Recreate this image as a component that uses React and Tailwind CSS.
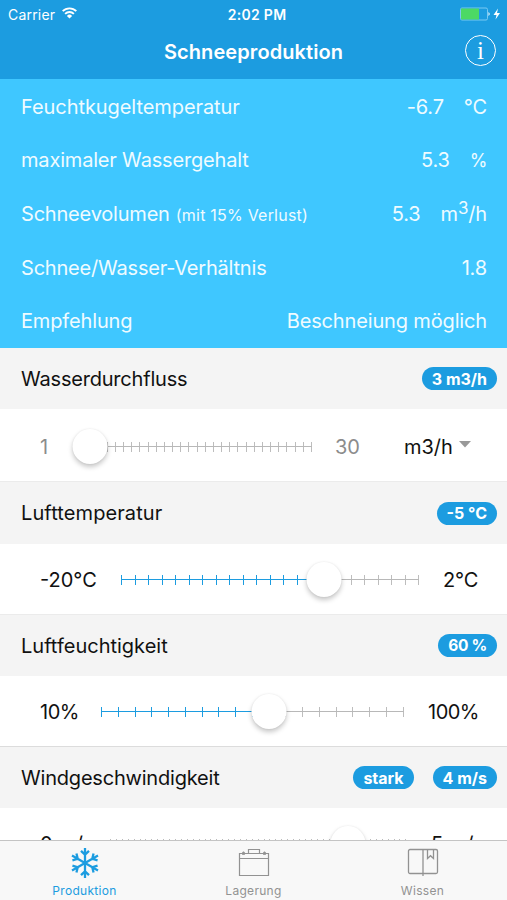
const results = [
  { label: "Feuchtkugeltemperatur", tracking: "tracking-[-0.07px]", value: "-6.7", unit: "°C" },
  {
    label: "maximaler Wassergehalt",
    tracking: "tracking-[-0.18px]",
    value: "5.3",
    unit: <span className="text-[18px] tracking-[-0.5px]">%</span>,
  },
  {
    label: "Schneevolumen",
    tracking: "tracking-[-0.2px]",
    note: "(mit 15% Verlust)",
    value: "5.3",
    unit: (
      <>
        m<sup className="-top-[7px] text-[17px] leading-none">3</sup>/h
      </>
    ),
  },
  { label: "Schnee/Wasser-Verhältnis", tracking: "tracking-[-0.2px]", value: "1.8" },
  { label: "Empfehlung", tracking: "tracking-[-0.15px]", value: "Beschneiung möglich" },
];

const Slider = ({ min, max, step, value }) => {
  const count = Math.round((max - min) / step);
  const active = Math.round((value - min) / step);
  const percent = ((value - min) / (max - min)) * 100;
  const filled = active > 2 && count < 50;

  return (
    <div className="relative flex h-[35px] flex-1 items-center justify-between">
      {Array.from({ length: count + 1 }, (_, i) => (
        <span
          key={i}
          className={
            filled && i <= active
              ? "h-[10px] w-px bg-[#1c9ce0]"
              : "h-[10px] w-px bg-[#bdbdbd]"
          }
        />
      ))}
      <div className="absolute inset-x-0 top-[17px] h-px bg-[#b8b8b8]" />
      {filled ? (
        <div
          className="absolute left-0 top-[17px] h-px bg-[#1c9ce0]"
          style={{ width: `${percent}%` }}
        />
      ) : null}
      <div
        className="absolute top-0 size-[35px] -translate-x-1/2 rounded-full bg-white shadow-[0_3px_5px_rgba(0,0,0,0.22),0_0_2px_rgba(0,0,0,0.08)]"
        style={{ left: `${percent}%` }}
      />
    </div>
  );
};

const SectionHeader = ({ title, badges, className = "h-[61px] tracking-[-0.2px]" }) => (
  <div className={`flex shrink-0 items-center justify-between bg-[#f4f4f4] pl-[21px] pr-[10px] ${className}`}>
    <h2 className="text-[20px]">{title}</h2>
    <div className="flex gap-[19px] tracking-normal">
      {badges.map((badge) => (
        <span
          key={badge}
          className={
            badge.endsWith("%")
              ? "flex h-[23px] items-center rounded-full bg-[#1c9ce0] px-[10px] text-[15.5px] font-bold tracking-[-0.3px] text-white"
              : "flex h-[23px] items-center rounded-full bg-[#1c9ce0] px-[10px] text-[16px] font-bold text-white"
          }
        >
          {badge}
        </span>
      ))}
    </div>
  </div>
);

const SnowflakeIcon = () => (
  <svg width="30" height="32" viewBox="0 0 30 32" fill="none" stroke="currentColor" strokeWidth="2.3">
    {[0, 60, 120, 180, 240, 300].map((angle) => (
      <path key={angle} d="M15 16V1M11 3.8L15 7.6L19 3.8" transform={`rotate(${angle} 15 16)`} />
    ))}
  </svg>
);

const StorageIcon = () => (
  <svg width="32" height="32" viewBox="0 0 32 32" fill="none" stroke="currentColor" strokeWidth="1.2">
    <path d="M1.5 6.5h29v22h-29zM1.5 11.5h29M10.5 6.5v-4h11v4M5.5 4.5v3M26.5 4.5v3" />
    <path d="M4 6.5h3M25 6.5h3" strokeWidth="2.4" />
  </svg>
);

const BookIcon = () => (
  <svg width="32" height="32" viewBox="0 0 32 32" fill="none" stroke="currentColor" strokeWidth="1.3">
    <rect x="1.5" y="2.5" width="29" height="24" rx="1.5" />
    <path d="M16 2.5v26.5M20.5 2.5v9l3-2.8l3 2.8v-9" />
  </svg>
);

const tabs = [
  { name: "Produktion", icon: <SnowflakeIcon />, active: true },
  { name: "Lagerung", icon: <StorageIcon /> },
  { name: "Wissen", icon: <BookIcon /> },
];

const App = () => {
  return (
    <div className="flex h-[900px] w-[507px] flex-col overflow-hidden bg-white font-['Inter',sans-serif] text-[20px] text-[#111] whitespace-nowrap">
      <header className="h-[79px] shrink-0 bg-[#1c9ce0] text-white">
        <div className="grid h-[28px] grid-cols-3 items-center pl-[8px] pr-[5px] text-[13.5px]">
          <div className="flex items-center gap-[7px]">
            <span className="text-[14px] tracking-[0.2px]">Carrier</span>
            <svg width="15" height="12" viewBox="0 0 15 12" fill="none" stroke="currentColor" strokeWidth="1.9" className="-mt-[2px]">
              <path d="M0.7 4.2a9.6 9.6 0 0 1 13.6 0M3.1 6.8a6.2 6.2 0 0 1 8.8 0" />
              <path d="M7.5 11.6L4.9 8.9a3.7 3.7 0 0 1 5.2 0z" fill="currentColor" stroke="none" />
            </svg>
          </div>
          <span className="ml-[4px] text-center text-[14px] font-semibold tracking-[0.3px]">2:02 PM</span>
          <svg className="-mt-px justify-self-end" width="43" height="14" viewBox="0 0 43 14">
            <rect x="1.5" y="1" width="27" height="12" rx="1.5" fill="none" stroke="#79c9f2" />
            <rect x="2" y="1.5" width="18" height="11" fill="#4cd964" />
            <path d="M29.5 5q2.4 2 0 4z" fill="#fff" />
            <path d="M39 1.5L34.5 8h3L36.5 12.5L41 6h-3z" fill="#fff" />
          </svg>
        </div>
        <div className="grid h-[48px] grid-cols-[40px_1fr_40px] items-center">
          <h1 className="col-start-2 text-center text-[20px] font-semibold tracking-[0.08px]">
            Schneeproduktion
          </h1>
          <div className="-mt-[4px] ml-[-2px] flex size-[31px] items-center justify-center rounded-full border-[1.5px] border-white font-['Liberation_Serif',serif] text-[25px] leading-none">
            i
          </div>
        </div>
      </header>

      <section className="flex h-[269px] shrink-0 flex-col bg-[#3fc7ff] pl-[21px] pr-[20px] pt-[1px] text-[#effbff]">
        {results.map((row) => (
          <div key={row.label} className="flex flex-1 items-center justify-between">
            <div>
              <span className={row.tracking}>{row.label}</span>
              {row.note ? <span className="ml-[6px] text-[16px] tracking-[0.22px]">{row.note}</span> : null}
            </div>
            <div className="flex gap-[20px] tracking-[-0.15px]">
              <span>{row.value}</span>
              {row.unit ? <span>{row.unit}</span> : null}
            </div>
          </div>
        ))}
      </section>

      <SectionHeader title="Wasserdurchfluss" badges={["3 m3/h"]} />
      <div className="flex h-[73px] shrink-0 items-center border-b border-[#ebebeb] pl-[40px] pr-[36px] pt-[3px]">
        <span className="w-[34px] text-[#8c8c8c]">1</span>
        <Slider min={1} max={30} step={1} value={3} />
        <span className="ml-[23px] w-[69px] text-[#8c8c8c]">30</span>
        <span className="w-[55px]">m3/h</span>
        <svg width="12" height="7" viewBox="0 0 12 7" className="-mt-[5px]">
          <path d="M0 0h12L6 6.5z" fill="#999" />
        </svg>
      </div>

      <SectionHeader title="Lufttemperatur" badges={["-5 °C"]} className="h-[62px] tracking-[0.1px]" />
      <div className="flex h-[71px] shrink-0 items-center border-b border-[#ebebeb] pl-[40px] pr-[29px] pt-[1px]">
        <span className="w-[81px]">-20°C</span>
        <Slider min={-20} max={2} step={1} value={-5} />
        <span className="ml-[24px] w-[35px] tracking-[-0.2px]">2°C</span>
      </div>

      <SectionHeader title="Luftfeuchtigkeit" badges={["60 %"]} className="h-[61px]" />
      <div className="flex h-[71px] shrink-0 items-center border-b border-[#dcdcdc] pl-[40px] pr-[29px] pt-[1px]">
        <span className="w-[61px] tracking-[-0.5px]">10%</span>
        <Slider min={10} max={100} step={5} value={60} />
        <span className="ml-[24px] w-[50px] tracking-[-0.5px]">100%</span>
      </div>

      <SectionHeader title="Windgeschwindigkeit" badges={["stark", "4 m/s"]} />
      <div className="h-[32px] shrink-0 overflow-hidden">
        <div className="flex h-[71px] items-center pl-[40px] pr-[24px]">
          <span className="w-[70px]">0 m/s</span>
          <Slider min={0} max={5} step={0.1} value={4} />
          <span className="ml-[24px] w-[52px]">5 m/s</span>
        </div>
      </div>

      <nav className="grid min-h-0 flex-1 grid-cols-3 border-t border-[#c4c4c4] bg-[#f8f8f8]">
        {tabs.map((tab) => (
          <div
            key={tab.name}
            className={
              tab.active
                ? "flex flex-col items-center pt-[6px] text-[#1c9ce0]"
                : "flex flex-col items-center pt-[6px] text-[#929292]"
            }
          >
            {tab.icon}
            <span className="mt-[4px] text-[12px] leading-[15px] tracking-[0.3px]">{tab.name}</span>
          </div>
        ))}
      </nav>
    </div>
  );
};

export default App;
